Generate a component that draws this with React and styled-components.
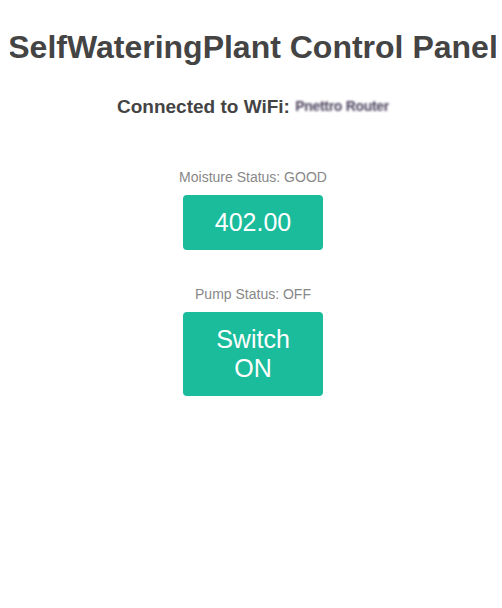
import React from 'react'
import styled, { createGlobalStyle } from 'styled-components'

const GlobalStyle = createGlobalStyle`
  body {
    margin: 8px 6px 8px 10px;
    background: #fff;
    font-family: "Liberation Sans", Arial, Helvetica, sans-serif;
  }
`

const Page = styled.div`
  text-align: center;
`

const Title = styled.h1`
  display: flex;
  justify-content: center;
  color: #444444;
  font-size: 32px;
  font-weight: 700;
  margin: 21px 0;
  white-space: nowrap;
`

const WifiLine = styled.h3`
  color: #444444;
  font-size: 19px;
  font-weight: 700;
  margin: 30px 0 51px;
`

const Blurred = styled.span`
  display: inline-block;
  font-size: 14px;
  font-weight: 700;
  color: #4f4660;
  filter: blur(0.8px);
  letter-spacing: -0.3px;
  vertical-align: 2px;
`

const Label = styled.p`
  font-size: 14px;
  color: #888;
  margin: 14px 0 10px;
`

const Tile = styled.div`
  display: block;
  box-sizing: content-box;
  width: 80px;
  background-color: #1abc9c;
  border: none;
  color: white;
  padding: 13px 30px;
  font-size: 25px;
  margin: 0 auto 36px;
  border-radius: 4px;
  font-family: "Liberation Sans", Arial, sans-serif;
  line-height: normal;
`

const Button = styled(Tile).attrs({ as: 'button' })`
  cursor: pointer;
`

export default function App() {
  return (
    <Page>
      <GlobalStyle />
      <Title>SelfWateringPlant Control Panel</Title>
      <WifiLine>
        Connected to WiFi: <Blurred>Pnettro Router</Blurred>
      </WifiLine>
      <Label>Moisture Status: GOOD</Label>
      <Tile>402.00</Tile>
      <Label>Pump Status: OFF</Label>
      <Button>Switch ON</Button>
    </Page>
  )
}
